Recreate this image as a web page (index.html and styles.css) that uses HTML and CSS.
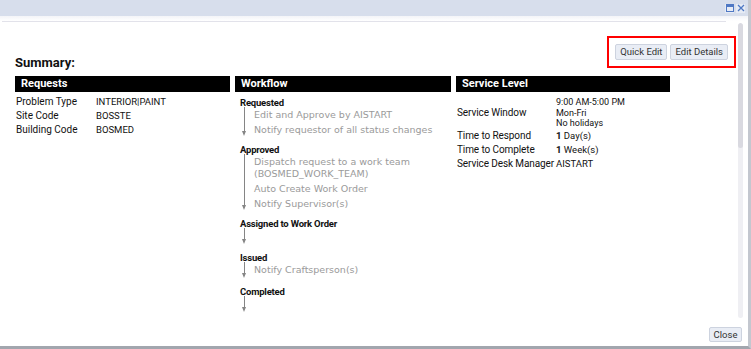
FILE: index.html
```html
<!DOCTYPE html>
<html>
<head>
<meta charset="utf-8">
<link rel="stylesheet" href="styles.css">
</head>
<body>
<div class="win">
  <div class="titlebar">
    <span class="tb-btn">
      <svg width="8" height="8" viewBox="0 0 8 8"><rect x="0.5" y="0.5" width="7" height="7" fill="none" stroke="#4f78c4"/><rect x="0" y="0" width="8" height="3" fill="#4f78c4"/></svg>
    </span>
    <span class="tb-btn">
      <svg width="8" height="8" viewBox="0 0 8 8"><path d="M1 1 L7 7 M7 1 L1 7" stroke="#4f78c4" stroke-width="1.3"/></svg>
    </span>
  </div>
  <div class="body">
    <div class="main">
      <div class="rule"></div>
      <div class="head-row">
        <h1 class="title">Summary:</h1>
        <div class="actions">
          <button class="btn">Quick Edit</button>
          <button class="btn">Edit Details</button>
        </div>
      </div>
      <div class="cols">
        <section class="col">
          <div class="col-head">Requests</div>
          <div class="kv-list">
            <div class="kv"><span class="k">Problem Type</span><span class="v">INTERIOR|PAINT</span></div>
            <div class="kv"><span class="k">Site Code</span><span class="v">BOSSTE</span></div>
            <div class="kv"><span class="k">Building Code</span><span class="v">BOSMED</span></div>
          </div>
        </section>
        <section class="col">
          <div class="col-head">Workflow</div>
          <div class="stages">
            <div class="stage">
              <div class="stage-name">Requested</div>
              <div class="stage-body">
                <div class="arrow"></div>
                <div class="steps">
                  <div class="step">Edit and Approve by AISTART</div>
                  <div class="step">Notify requestor of all status changes</div>
                </div>
              </div>
            </div>
            <div class="stage">
              <div class="stage-name">Approved</div>
              <div class="stage-body">
                <div class="arrow"></div>
                <div class="steps">
                  <div class="step">Dispatch request to a work team (BOSMED_WORK_TEAM)</div>
                  <div class="step">Auto Create Work Order</div>
                  <div class="step">Notify Supervisor(s)</div>
                </div>
              </div>
            </div>
            <div class="stage">
              <div class="stage-name">Assigned to Work Order</div>
              <div class="stage-body">
                <div class="arrow"></div>
                <div class="steps"></div>
              </div>
            </div>
            <div class="stage">
              <div class="stage-name">Issued</div>
              <div class="stage-body">
                <div class="arrow"></div>
                <div class="steps">
                  <div class="step">Notify Craftsperson(s)</div>
                </div>
              </div>
            </div>
            <div class="stage">
              <div class="stage-name">Completed</div>
              <div class="stage-body">
                <div class="arrow"></div>
                <div class="steps"></div>
              </div>
            </div>
          </div>
        </section>
        <section class="col">
          <div class="col-head">Service Level</div>
          <div class="sl-list">
            <div class="sl"><span class="k">Service Window</span><span class="v multi"><span>9:00 AM-5:00 PM</span><span>Mon-Fri</span><span>No holidays</span></span></div>
            <div class="sl"><span class="k">Time to Respond</span><span class="v"><b>1</b> Day(s)</span></div>
            <div class="sl"><span class="k">Time to Complete</span><span class="v"><b>1</b> Week(s)</span></div>
            <div class="sl"><span class="k">Service Desk Manager</span><span class="v">AISTART</span></div>
          </div>
        </section>
      </div>
    </div>
    <div class="scroll"><div class="thumb"></div></div>
  </div>
  <div class="footer">
    <button class="btn close">Close</button>
  </div>
</div>
</body>
</html>
```

FILE: styles.css
```css
* { box-sizing: border-box; }
html, body { margin: 0; padding: 0; background: #fff; }
body { font-family: Roboto, "Liberation Sans", sans-serif; color: #111; }

.win {
  width: 751px;
  height: 349px;
  border-right: 3px solid #c3c7cf;
  border-bottom: 3px solid #a2a6ae;
  display: flex;
  flex-direction: column;
  overflow: hidden;
  background: #fff;
}

.titlebar {
  height: 16px;
  flex: none;
  background: #d7deec;
  display: flex;
  justify-content: flex-end;
  align-items: center;
  gap: 2px;
  padding-right: 3px;
}
.tb-btn {
  width: 9px;
  height: 9px;
  display: flex;
  align-items: center;
  justify-content: center;
  background: #e6ebf5;
}
.tb-btn svg { display: block; }

.body {
  height: 306px;
  flex: none;
  display: flex;
  background: linear-gradient(#f3f4f8, #fff 5px);
}
.main {
  width: 738px;
  flex: none;
}
.rule {
  height: 1px;
  margin: 5px 12px 0 2px;
  background: #e2e2ea;
}
.head-row {
  display: flex;
  justify-content: space-between;
  align-items: flex-end;
  margin-top: 14px;
  padding-left: 15px;
  padding-right: 2px;
}
.title {
  margin: 0 0 -2px 0;
  font-size: 13px;
  line-height: 15px;
  font-weight: 700;
}
.actions {
  border: 2px solid #f00;
  padding: 6px;
  display: flex;
  gap: 3px;
}
.btn {
  height: 16px;
  padding: 0 4px;
  font-family: Roboto, "Liberation Sans", sans-serif;
  font-size: 9.5px;
  line-height: 14px;
  color: #333;
  background: #e9edf5;
  border: 1px solid #cdd3df;
  border-radius: 2px;
}

.cols {
  display: grid;
  grid-template-columns: 215px 216px 214px;
  column-gap: 5px;
  padding-left: 15px;
  margin-top: 8px;
}
.col-head {
  height: 16px;
  background: #000;
  color: #fff;
  font-weight: 700;
  font-size: 11px;
  line-height: 16px;
  padding-left: 6px;
}

.kv-list { padding: 3px 0 0 1px; }
.kv {
  display: flex;
  font-size: 10px;
  line-height: 14px;
}
.kv .k { width: 80px; flex: none; }
.kv .v { font-size: 9.5px; }

.stages { padding: 5px 0 0 5px; }
.stage { margin-bottom: 6px; }
.stage:nth-child(2) { margin-top: 1px; }
.stage-name {
  font-size: 9.5px;
  font-weight: 700;
  line-height: 12px;
  letter-spacing: -0.2px;
}
.stage-body {
  display: flex;
  min-height: 16px;
  padding-bottom: 2px;
}
.arrow {
  width: 9px;
  flex: none;
  position: relative;
  margin-right: 5px;
  margin-top: -2px;
}
.arrow::before {
  content: "";
  position: absolute;
  left: 4px;
  top: 0;
  bottom: 3px;
  width: 1px;
  background: #858585;
}
.arrow::after {
  content: "";
  position: absolute;
  left: 2px;
  bottom: 0;
  border-left: 2.5px solid transparent;
  border-right: 2.5px solid transparent;
  border-top: 5px solid #858585;
}
.step {
  font-family: "DejaVu Sans", Verdana, sans-serif;
  font-size: 9.5px;
  line-height: 12px;
  color: #9a9a9a;
  margin-top: 3px;
  width: 192px;
}
.step:first-child { margin-top: 0; }

.sl-list { padding: 5px 0 0 1px; }
.sl {
  display: flex;
  align-items: center;
  font-size: 10px;
  line-height: 14px;
  white-space: nowrap;
}
.sl .k { width: 99px; flex: none; letter-spacing: -0.1px; }
.sl .v { font-size: 9.5px; }
.sl .v.multi {
  display: flex;
  flex-direction: column;
  font-size: 9px;
  line-height: 10.5px;
}
.sl .v b { font-weight: 700; }

.scroll {
  width: 5px;
  height: 295px;
  margin-top: 7px;
  background: #efeff3;
  border-radius: 3px;
  overflow: hidden;
}
.thumb {
  height: 125px;
  background: #d9d9e0;
  border-radius: 3px;
}

.footer {
  flex: 1;
  display: flex;
  justify-content: flex-end;
  align-items: flex-start;
  padding: 5px 6px 0 0;
}
.btn.close {
  height: 15px;
  width: 33px;
  padding: 0;
  line-height: 13px;
}
```
